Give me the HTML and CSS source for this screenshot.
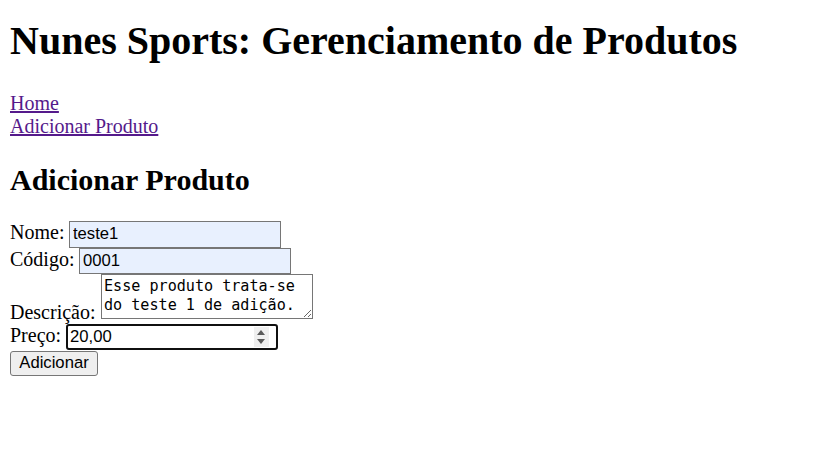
FILE: index.html
```html
<!DOCTYPE html>
<html lang="pt-BR">
<head>
<meta charset="utf-8">
<title>Nunes Sports</title>
<link rel="stylesheet" href="styles.css">
</head>
<body>
<h1 class="title">Nunes Sports: Gerenciamento de Produtos</h1>
<nav class="nav">
<a class="nav-link" href="#">Home</a><br>
<a class="nav-link" href="#">Adicionar Produto</a>
</nav>
<h2 class="subtitle">Adicionar Produto</h2>
<form class="form">
<label class="label" for="nome">Nome:</label> <input class="field autofill" id="nome" type="text" value="teste1"><br>
<label class="label" for="codigo">Código:</label> <input class="field autofill" id="codigo" type="text" value="0001"><br>
<label class="label" for="descricao">Descrição:</label> <textarea class="area" id="descricao">Esse produto trata-se do teste 1 de adição.</textarea><br>
<label class="label" for="preco">Preço:</label> <span class="number-wrap"><input class="field focused" id="preco" type="text" value="20,00"><span class="spinner"><span class="tri up"></span><span class="tri down"></span></span></span><br>
<button class="btn" type="button">Adicionar</button>
</form>
</body>
</html>
```
FILE: styles.css
```css
html {
  background: #fff;
}
body {
  margin: 0;
  padding: 17px 10px 10px;
  font-family: "Liberation Serif", "Times New Roman", serif;
  font-size: 20px;
  color: #000;
}
.title {
  font-size: 40px;
  font-weight: bold;
  margin: 0 0 28px;
}
.nav {
  margin: 0;
}
.nav-link {
  color: #551a8b;
  text-decoration: underline;
}
.subtitle {
  font-size: 30px;
  font-weight: bold;
  margin: 24.5px 0 24.5px;
}
.form {
  margin: 0;
}
.label {
  font-size: 20px;
}
.field {
  box-sizing: border-box;
  width: 212px;
  height: 26.5px;
  margin: 0;
  padding: 1px 2.5px;
  border: 1px solid #767676;
  border-radius: 0;
  font-family: "Liberation Sans", Arial, sans-serif;
  font-size: 16.67px;
  color: #000;
  background: #fff;
  vertical-align: baseline;
}
.autofill {
  background: #e8f0fe;
}
.focused {
  border: 2px solid #101010;
  border-radius: 3px;
  padding: 1px 2px;
  outline: none;
}
.area {
  box-sizing: border-box;
  width: 212px;
  height: 44.5px;
  margin: 0;
  padding: 2px 2.5px;
  border: 1px solid #767676;
  font-family: "DejaVu Sans Mono", monospace;
  font-size: 15.1px;
  line-height: 18.5px;
  color: #000;
  resize: both;
  vertical-align: baseline;
  overflow: hidden;
}
.number-wrap {
  position: relative;
  display: inline-block;
}
.spinner {
  position: absolute;
  top: 3px;
  right: 9px;
  width: 15px;
  height: 20px;
  background: #efefef;
}
.tri {
  position: absolute;
  left: 3px;
  width: 0;
  height: 0;
  border-left: 4.5px solid transparent;
  border-right: 4.5px solid transparent;
}
.up {
  top: 3px;
  border-bottom: 5px solid #5a5a5a;
}
.down {
  top: 12px;
  border-top: 5px solid #5a5a5a;
}
.btn {
  box-sizing: border-box;
  width: 88px;
  height: 25px;
  margin: 0;
  padding: 1px 7.5px;
  border: 1px solid #767676;
  border-radius: 3px;
  background: #efefef;
  font-family: "Liberation Sans", Arial, sans-serif;
  font-size: 16.67px;
  color: #000;
}
```
